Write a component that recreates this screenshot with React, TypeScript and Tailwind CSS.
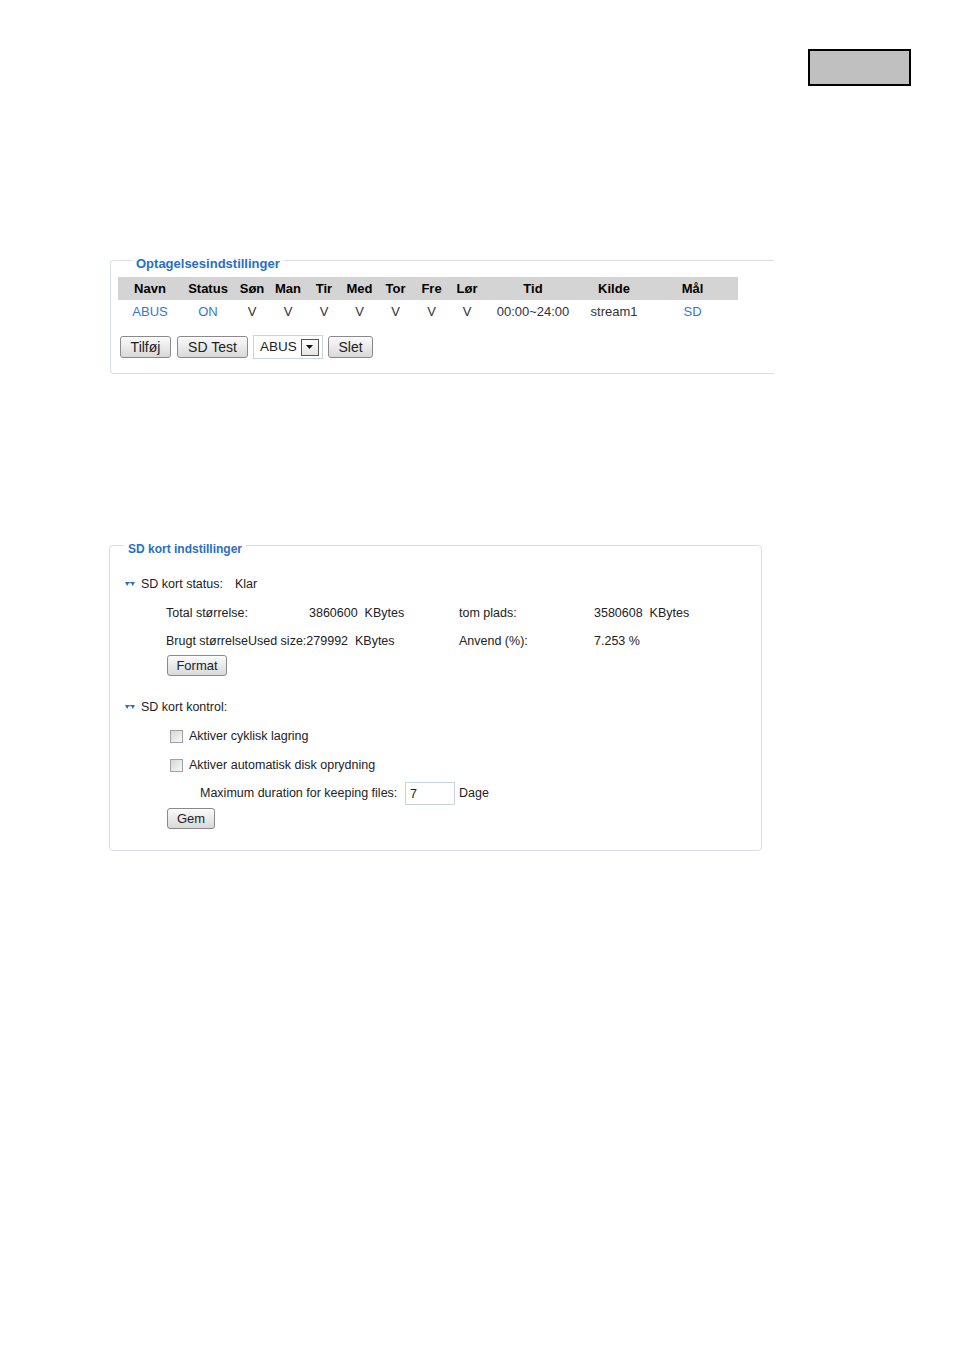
import React from "react";

const COLS = [
  { label: "Navn", w: "w-[64px]" },
  { label: "Status", w: "w-[52px]" },
  { label: "Søn", w: "w-[36px]" },
  { label: "Man", w: "w-[36px]" },
  { label: "Tir", w: "w-[36px]" },
  { label: "Med", w: "w-[35px]" },
  { label: "Tor", w: "w-[37px]" },
  { label: "Fre", w: "w-[35px]" },
  { label: "Lør", w: "w-[36px]" },
  { label: "Tid", w: "w-[96px]" },
  { label: "Kilde", w: "w-[66px]" },
  { label: "Mål", w: "w-[91px]" },
];

const ROW = ["ABUS", "ON", "V", "V", "V", "V", "V", "V", "V", "00:00~24:00", "stream1", "SD"];
const LINKS = [0, 1, 11];

function Btn({ children, className = "" }: { children: React.ReactNode; className?: string }) {
  return (
    <button
      className={
        "flex items-center justify-center rounded-[3px] border border-[#8a8a8a] bg-gradient-to-b from-[#fbfbfb] to-[#d9d9d9] text-[#222] shadow-[inset_0_1px_0_#fff] " +
        className
      }
    >
      {children}
    </button>
  );
}

function Chevrons() {
  return (
    <svg width="10" height="5" viewBox="0 0 10 5" className="text-[#2a70c0]">
      <path d="M0 0 H4.4 L2.2 4 Z M5.6 0 H10 L7.8 4 Z" fill="currentColor" />
      <path d="M4 0 L5 2 L6 0 Z" fill="currentColor" />
    </svg>
  );
}

function Check() {
  return (
    <input
      type="checkbox"
      className="h-[13px] w-[13px] appearance-none border border-[#a2a2a2] bg-gradient-to-br from-[#d6d6d6] to-[#f9f9f9]"
    />
  );
}

export default function App() {
  return (
    <div className="min-h-[1350px] bg-white font-['Liberation_Sans',Arial,sans-serif] text-[#222]">
      <div className="flex justify-end pr-[43px] pt-[49px]">
        <div className="h-[37px] w-[103px] border-2 border-black bg-[#c0c0c0]" />
      </div>

      {/* recording settings */}
      <fieldset className="ml-[110px] mt-[163px] w-[664px] rounded-l-[4px] border border-r-0 border-[#d6dee9] pb-[14px] pl-[7px]">
        <legend className="ml-[14px] px-[4px] pt-2 text-[13px] font-bold leading-[14px] text-[#2a6fc0]">
          Optagelsesindstillinger
        </legend>
        <table className="mt-[6px] w-[620px] table-fixed border-collapse text-[13px]">
          <colgroup>
            {COLS.map((c) => (
              <col key={c.label} className={c.w} />
            ))}
          </colgroup>
          <thead>
            <tr className="h-[23px] bg-[#d4d4d4]">
              {COLS.map((c) => (
                <th key={c.label} className="p-0 text-center font-bold text-black">
                  {c.label}
                </th>
              ))}
            </tr>
          </thead>
          <tbody>
            <tr className="h-[24px]">
              {ROW.map((v, i) => (
                <td key={i} className={"p-0 text-center " + (LINKS.includes(i) ? "text-[#3a78c6]" : "text-[#333]")}>
                  {v}
                </td>
              ))}
            </tr>
          </tbody>
        </table>
        <div className="mt-[11px] flex items-center text-[14px]">
          <Btn className="ml-[2px] h-[22px] w-[51px]">Tilføj</Btn>
          <Btn className="ml-[6px] h-[22px] w-[71px]">SD Test</Btn>
          <div className="ml-[5px] flex h-[24px] w-[70px] items-center border border-[#c9d4e1] bg-white pl-[6px] text-[13.5px]">
            <span>ABUS</span>
            <span className="ml-[4px] flex h-[17px] w-[18px] items-center justify-center border border-[#555] bg-gradient-to-b from-white to-[#e4e4e4]">
              <svg width="7" height="4" viewBox="0 0 7 4">
                <path d="M0 0 L7 0 L3.5 4 Z" fill="#111" />
              </svg>
            </span>
          </div>
          <Btn className="ml-[5px] h-[22px] w-[45px]">Slet</Btn>
        </div>
      </fieldset>

      {/* SD card settings */}
      <fieldset className="ml-[109px] mt-[160px] w-[653px] rounded-[4px] border border-[#d6dee9] pb-[21px] text-[12.5px]">
        <legend className="ml-[14px] px-[4px] pt-2 text-[12px] font-bold leading-[14px] text-[#2a6fc0]">
          SD kort indstillinger
        </legend>

        <div className="mt-[18px] flex h-[20px] items-center pl-[15px]">
          <Chevrons />
          <span className="ml-[6px] w-[94px]">SD kort status:</span>
          <span>Klar</span>
        </div>

        <div className="ml-[56px] mt-[9px] grid h-[20px] grid-cols-[143px_150px_135px_auto] items-center">
          <span>Total størrelse:</span>
          <span>3860600&nbsp;&nbsp;KBytes</span>
          <span>tom plads:</span>
          <span>3580608&nbsp;&nbsp;KBytes</span>
        </div>
        <div className="ml-[56px] mt-[8px] grid h-[20px] grid-cols-[293px_135px_auto] items-center">
          <span>Brugt størrelseUsed size:279992&nbsp;&nbsp;KBytes</span>
          <span>Anvend (%):</span>
          <span>7.253 %</span>
        </div>
        <Btn className="ml-[57px] mt-[4px] h-[21px] w-[60px] text-[13px]">Format</Btn>

        <div className="mt-[21px] flex h-[20px] items-center pl-[15px]">
          <Chevrons />
          <span className="ml-[6px]">SD kort kontrol:</span>
        </div>

        <label className="ml-[60px] mt-[9px] flex h-[20px] items-center gap-[6px]">
          <Check />
          <span>Aktiver cyklisk lagring</span>
        </label>
        <label className="ml-[60px] mt-[9px] flex h-[20px] items-center gap-[6px]">
          <Check />
          <span>Aktiver automatisk disk oprydning</span>
        </label>

        <div className="ml-[90px] mt-[7px] flex h-[23px] items-center">
          <span className="w-[205px]">Maximum duration for keeping files:</span>
          <input
            defaultValue="7"
            className="h-[23px] w-[50px] border border-[#c9d4e1] px-[4px] text-[12.5px] outline-none"
          />
          <span className="ml-[4px]">Dage</span>
        </div>
        <Btn className="ml-[57px] mt-[3px] h-[21px] w-[48px] text-[13px]">Gem</Btn>
      </fieldset>
    </div>
  );
}
